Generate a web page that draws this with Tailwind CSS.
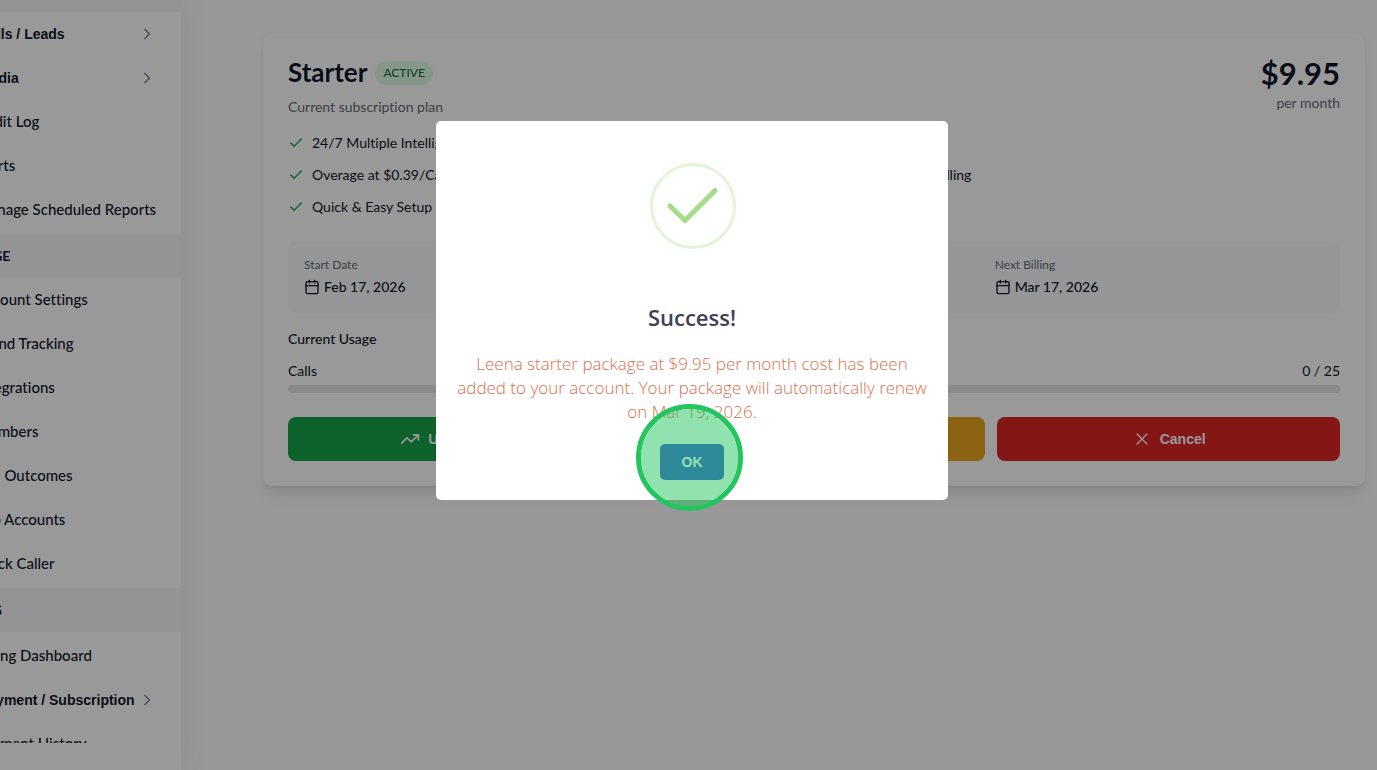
<!DOCTYPE html>
<html lang="en">
<head>
  <meta charset="UTF-8" />
  <meta name="viewport" content="width=device-width, initial-scale=1.0" />
  <title>Subscription | Billing</title>
  <script src="https://cdn.jsdelivr.net/npm/@tailwindcss/browser@4"></script>
</head>
<body class="bg-[#fdfdfe] font-[Lato,sans-serif] [font-variant-ligatures:none] text-sm text-[#0f172a] h-screen overflow-hidden flex">

  <!-- Sidebar, slid partly off the left edge -->
  <aside class="w-60 -ml-[59px] shrink-0 h-full pb-[27px] bg-white shadow-[0_0_28px_rgba(82,85,120,0.12)]">
    <nav class="h-full overflow-hidden font-medium text-[15px]">
      <h2 class="h-3 bg-[#f5f5fa]"></h2>
      <ul class="pb-0.5">
        <li><a href="#" class="h-11 pl-[38px] pr-7 flex items-center justify-between font-['Liberation_Sans',sans-serif] text-sm font-bold">Calls / Leads
          <svg class="w-3 h-3" viewBox="0 0 12 12" fill="none" stroke="#64748b" stroke-width="1.2"><path d="M3.500 1l5 5-5 5" /></svg></a></li>
        <li><a href="#" class="h-11 pl-[38px] pr-7 flex items-center justify-between font-['Liberation_Sans',sans-serif] text-sm font-bold">Media
          <svg class="w-3 h-3" viewBox="0 0 12 12" fill="none" stroke="#64748b" stroke-width="1.2"><path d="M3.500 1l5 5-5 5" /></svg></a></li>
        <li><a href="#" class="h-11 pl-[35px] flex items-center">Audit Log</a></li>
        <li><a href="#" class="h-11 pl-[35px] flex items-center">Alerts</a></li>
        <li><a href="#" class="h-11 pl-[35px] flex items-center">Manage Scheduled Reports</a></li>
      </ul>
      <h2 class="h-11 pl-2 flex items-center text-sm font-bold bg-[#f5f5fa]">MANAGE</h2>
      <ul class="pb-0.5">
        <li><a href="#" class="h-11 pl-[35px] flex items-center">Account Settings</a></li>
        <li><a href="#" class="h-11 pl-[35px] flex items-center">Brand Tracking</a></li>
        <li><a href="#" class="h-11 pl-[35px] flex items-center">Integrations</a></li>
        <li><a href="#" class="h-11 pl-[35px] flex items-center">Members</a></li>
        <li><a href="#" class="h-11 pl-[35px] flex items-center">Call Outcomes</a></li>
        <li><a href="#" class="h-11 pl-[35px] flex items-center">Sub Accounts</a></li>
        <li><a href="#" class="h-11 pl-[35px] flex items-center">Block Caller</a></li>
      </ul>
      <h2 class="h-11 pl-2 flex items-center text-sm font-bold bg-[#f5f5fa]">BILLING</h2>
      <ul class="pt-0.5">
        <li><a href="#" class="h-11 pl-[35px] flex items-center">Billing Dashboard</a></li>
        <li><a href="#" class="h-11 pl-[38px] pr-7 flex items-center justify-between font-['Liberation_Sans',sans-serif] text-sm font-bold">Payment / Subscription
          <svg class="w-3 h-3" viewBox="0 0 12 12" fill="none" stroke="#64748b" stroke-width="1.2"><path d="M3.500 1l5 5-5 5" /></svg></a></li>
        <li><a href="#" class="h-11 pl-[35px] flex items-center">Payment History</a></li>
      </ul>
    </nav>
  </aside>

  <!-- Main -->
  <main class="flex-1 min-w-0 pt-8 pl-[82px] pr-3">
    <section class="bg-white border border-[#fafafa] rounded-lg shadow-lg p-6">
      <div class="flex justify-between items-start">
        <div>
          <div class="flex items-center gap-2 h-8">
            <h1 class="text-[26px] font-bold">Starter</h1>
            <span class="h-6 px-2 flex items-center rounded-full bg-[#dcfce7] text-[#166534] text-xs">ACTIVE</span>
          </div>
          <p class="mt-2 leading-5 text-[#666b73]">Current subscription plan</p>
        </div>
        <div class="text-right">
          <p class="text-[31px] leading-8 font-bold">$9.95</p>
          <p class="mt-1 leading-5 text-[#666b73]">per month</p>
        </div>
      </div>

      <!-- Features -->
      <ul class="mt-4 grid grid-cols-2 gap-3 leading-5">
        <li class="flex items-center gap-2">
          <svg class="w-4 h-4" viewBox="0 0 24 24" fill="none" stroke="#16a34a" stroke-width="2" stroke-linecap="round" stroke-linejoin="round"><path d="M20 6 9 17l-5-5" /></svg>
          24/7 Multiple Intelligent Agents</li>
        <li class="flex items-center gap-2">
          <svg class="w-4 h-4" viewBox="0 0 24 24" fill="none" stroke="#16a34a" stroke-width="2" stroke-linecap="round" stroke-linejoin="round"><path d="M20 6 9 17l-5-5" /></svg>
          25 Calls</li>
        <li class="flex items-center gap-2">
          <svg class="w-4 h-4" viewBox="0 0 24 24" fill="none" stroke="#16a34a" stroke-width="2" stroke-linecap="round" stroke-linejoin="round"><path d="M20 6 9 17l-5-5" /></svg>
          Overage at $0.39/Call</li>
        <li class="flex items-center gap-2">
          <svg class="w-4 h-4" viewBox="0 0 24 24" fill="none" stroke="#16a34a" stroke-width="2" stroke-linecap="round" stroke-linejoin="round"><path d="M20 6 9 17l-5-5" /></svg>
          Instant Call Handling</li>
        <li class="flex items-center gap-2">
          <svg class="w-4 h-4" viewBox="0 0 24 24" fill="none" stroke="#16a34a" stroke-width="2" stroke-linecap="round" stroke-linejoin="round"><path d="M20 6 9 17l-5-5" /></svg>
          Quick &amp; Easy Setup</li>
      </ul>

      <!-- Billing dates -->
      <dl class="mt-6 p-4 grid grid-cols-3 gap-4 rounded-lg bg-[#f8fafc]">
        <div>
          <dt class="text-xs text-[#666b73]">Start Date</dt>
          <dd class="mt-1 flex items-center gap-1 leading-5 font-medium">
            <svg class="w-4 h-4" viewBox="0 0 24 24" fill="none" stroke="currentColor" stroke-width="2" stroke-linecap="round" stroke-linejoin="round"><path d="M8 2v4M16 2v4M3 10h18" /><rect x="3" y="4" width="18" height="18" rx="2" /></svg>
            Feb 17, 2026</dd>
        </div>
        <div>
          <dt class="text-xs text-[#666b73]">Status</dt>
          <dd class="mt-1 leading-5 font-medium">Active</dd>
        </div>
        <div>
          <dt class="text-xs text-[#666b73]">Next Billing</dt>
          <dd class="mt-1 flex items-center gap-1 leading-5 font-medium">
            <svg class="w-4 h-4" viewBox="0 0 24 24" fill="none" stroke="currentColor" stroke-width="2" stroke-linecap="round" stroke-linejoin="round"><path d="M8 2v4M16 2v4M3 10h18" /><rect x="3" y="4" width="18" height="18" rx="2" /></svg>
            Mar 17, 2026</dd>
        </div>
      </dl>

      <!-- Usage -->
      <h2 class="mt-4 leading-5 font-medium">Current Usage</h2>
      <div class="mt-3 flex justify-between leading-5">
        <span>Calls</span>
        <span>0 / 25</span>
      </div>
      <div class="mt-1 h-2 rounded-full bg-[#e5e6e8]"></div>

      <!-- Actions -->
      <div class="mt-6 grid grid-cols-3 gap-3 font-['Liberation_Sans',sans-serif] font-bold text-white">
        <button type="button" class="h-11 flex items-center justify-center gap-2 rounded-lg bg-[#16a34a]">
          <svg class="w-5 h-5" viewBox="0 0 24 24" fill="none" stroke="currentColor" stroke-width="2" stroke-linecap="round" stroke-linejoin="round"><path d="M22 7l-8.500 8.500-5-5L2 17" /><path d="M16 7h6v6" /></svg>
          Upgrade Plan</button>
        <button type="button" class="h-11 rounded-lg bg-[#eaa320]">Downgrade</button>
        <button type="button" class="h-11 flex items-center justify-center gap-2 rounded-lg bg-[#dc2626]">
          <svg class="w-5 h-5" viewBox="0 0 24 24" fill="none" stroke="currentColor" stroke-width="1.5" stroke-linecap="round"><path d="M18 6 6 18M6 6l12 12" /></svg>
          Cancel</button>
      </div>
    </section>
  </main>

  <!-- Success dialog -->
  <div class="fixed inset-0 bg-black/40 flex items-center justify-center pl-[7px] pb-[149px]">
    <div role="dialog" aria-labelledby="dialogTitle" class="w-lg px-5 pt-[42px] pb-5 flex flex-col items-center rounded-[5px] bg-white text-center font-['Open_Sans',sans-serif]">
      <svg class="w-[88px] h-[86px]" viewBox="0 0 88 86" fill="none">
        <circle cx="45" cy="43" r="41.500" stroke="#e4f4da" stroke-width="3" />
        <path d="M22 43L37 57.500L67 27.500" stroke="#a5dc86" stroke-width="5" stroke-linecap="round" stroke-linejoin="round" />
      </svg>
      <h2 id="dialogTitle" class="mt-[50px] text-[22px] leading-9 font-semibold text-[#3f4056]">Success!</h2>
      <p class="mt-[17px] text-[17px] leading-6 font-light text-[#d9704c]">Leena starter package at $9.95 per month cost has been added to your account. Your package will automatically renew on Mar 19, 2026.</p>
      <div class="relative mt-5">
        <button type="button" class="w-16 h-9 rounded-[5px] bg-[#3a4fd6] text-white font-['Liberation_Sans',sans-serif] text-sm font-bold">OK</button>
        <!-- Click marker -->
        <span class="absolute -left-6 -top-10 w-[107px] h-[107px] rounded-full border-[5px] border-[#22c55e] bg-[#22c55e]/50 bg-clip-padding pointer-events-none"></span>
      </div>
    </div>
  </div>

</body>
</html>
